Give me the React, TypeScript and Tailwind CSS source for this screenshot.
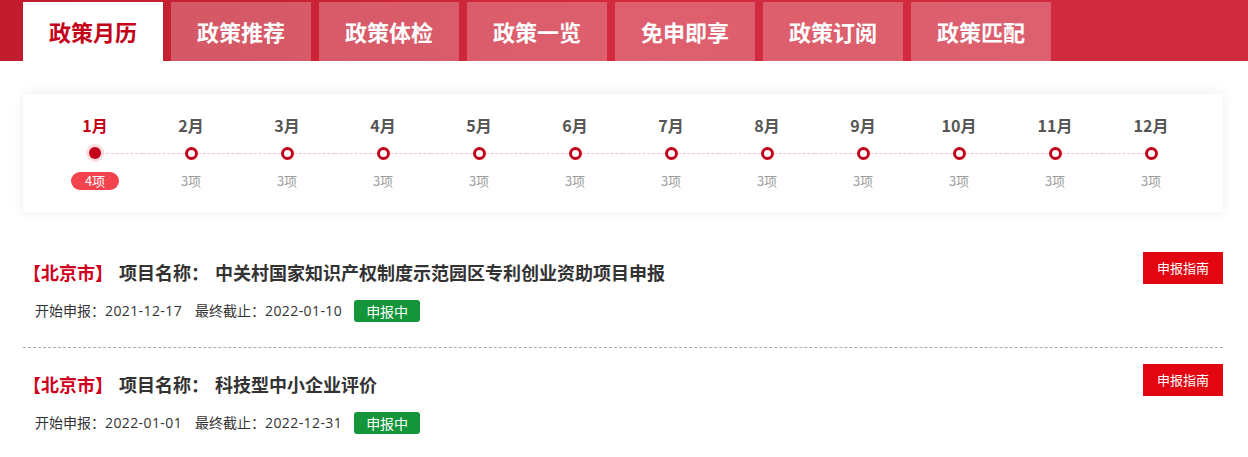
const tabs = ["政策月历", "政策推荐", "政策体检", "政策一览", "免申即享", "政策订阅", "政策匹配"];

const months = Array.from({ length: 12 }, (_, i) => ({
  label: `${i + 1}月`,
  count: i === 0 ? 4 : 3,
}));

const items = [
  {
    city: "北京市",
    name: "中关村国家知识产权制度示范园区专利创业资助项目申报",
    start: "2021-12-17",
    end: "2022-01-10",
  },
  {
    city: "北京市",
    name: "科技型中小企业评价",
    start: "2022-01-01",
    end: "2022-12-31",
  },
];

function Header() {
  return (
    <div className="h-[61px] bg-gradient-to-r from-[#c11b2e] via-[#d32a3e] to-[#d02b3f] pt-[2px] pl-[23px]">
      <div className="flex gap-[8px] h-[59px]">
        {tabs.map((t, i) => (
          <div
            key={t}
            className={
              i === 0
                ? "w-[140px] h-full bg-white flex items-center justify-center text-[22px] font-bold text-[#c40018]"
                : "w-[140px] h-full bg-white/25 flex items-center justify-center text-[22px] font-bold text-white"
            }
          >
            {t}
          </div>
        ))}
      </div>
    </div>
  );
}

function Calendar() {
  return (
    <div className="ml-[23px] w-[1200px] mt-[33px] bg-white shadow-[0_0_12px_rgba(0,0,0,0.08)] px-[24px] pt-[19px] pb-[22px]">
      <div className="grid grid-cols-12">
        {months.map((m, i) => (
          <div key={m.label} className="flex flex-col items-center">
            <div
              className={
                i === 0
                  ? "text-[16px] leading-[24px] font-bold text-[#c40018]"
                  : "text-[16px] leading-[24px] font-bold text-[#555]"
              }
            >
              {m.label}
            </div>
            <div className="mt-[10px] flex items-center w-full h-[12px]">
              <div className={i === 0 ? "flex-1" : "flex-1 border-t border-dashed border-[#ecc9cd]"} />
              {i === 0 ? (
                <div className="w-[12px] h-[12px] rounded-full bg-[#c40018] shadow-[0_0_0_3px_#fbdde0]" />
              ) : (
                <div className="w-[13px] h-[13px] rounded-full border-[3px] border-[#c40018] bg-white" />
              )}
              <div className={i === 11 ? "flex-1" : "flex-1 border-t border-dashed border-[#ecc9cd]"} />
            </div>
            <div className="mt-[13px] h-[18px] flex items-center">
              {i === 0 ? (
                <span className="h-[18px] w-[48px] rounded-full bg-[#f2434f] text-white text-[13px] leading-[18px] text-center">
                  {m.count}项
                </span>
              ) : (
                <span className="text-[13px] leading-[18px] text-[#999]">{m.count}项</span>
              )}
            </div>
          </div>
        ))}
      </div>
    </div>
  );
}

function Item({ item, first }: { item: (typeof items)[number]; first: boolean }) {
  return (
    <div className={first ? "flex justify-between items-start pb-[25px] border-b border-dashed border-[#aaa]" : "flex justify-between items-start pt-[16px]"}>
      <div>
        <div className="pt-[8px] text-[18px] leading-[24px] font-bold flex">
          <span className="text-[#d0021b]">【{item.city}】</span>
          <span className="ml-[6px] text-[#333]">项目名称：</span>
          <span className="ml-[6px] text-[#333]">{item.name}</span>
        </div>
        <div className="mt-[15px] pl-[12px] flex items-center text-[14px] leading-[22px] text-[#333]">
          <span>
            开始申报：<span className="font-['Open_Sans',sans-serif] tracking-[0.4px]">{item.start}</span>
          </span>
          <span className="ml-[13px]">
            最终截止：<span className="font-['Open_Sans',sans-serif] tracking-[0.4px]">{item.end}</span>
          </span>
          <span className="ml-[12px] h-[22px] px-[12px] rounded-[3px] bg-[#15953a] text-white text-[14px] leading-[22px]">
            申报中
          </span>
        </div>
      </div>
      <button className="w-[80px] h-[32px] bg-[#e20612] text-white text-[13px]">申报指南</button>
    </div>
  );
}

export default function App() {
  return (
    <div className="w-[1248px] h-[457px] bg-white overflow-hidden font-['Microsoft_YaHei','Noto_Sans_CJK_SC',sans-serif]">
      <Header />
      <Calendar />
      <div className="ml-[23px] w-[1200px] mt-[40px]">
        {items.map((it, i) => (
          <Item key={it.name} item={it} first={i === 0} />
        ))}
      </div>
    </div>
  );
}
